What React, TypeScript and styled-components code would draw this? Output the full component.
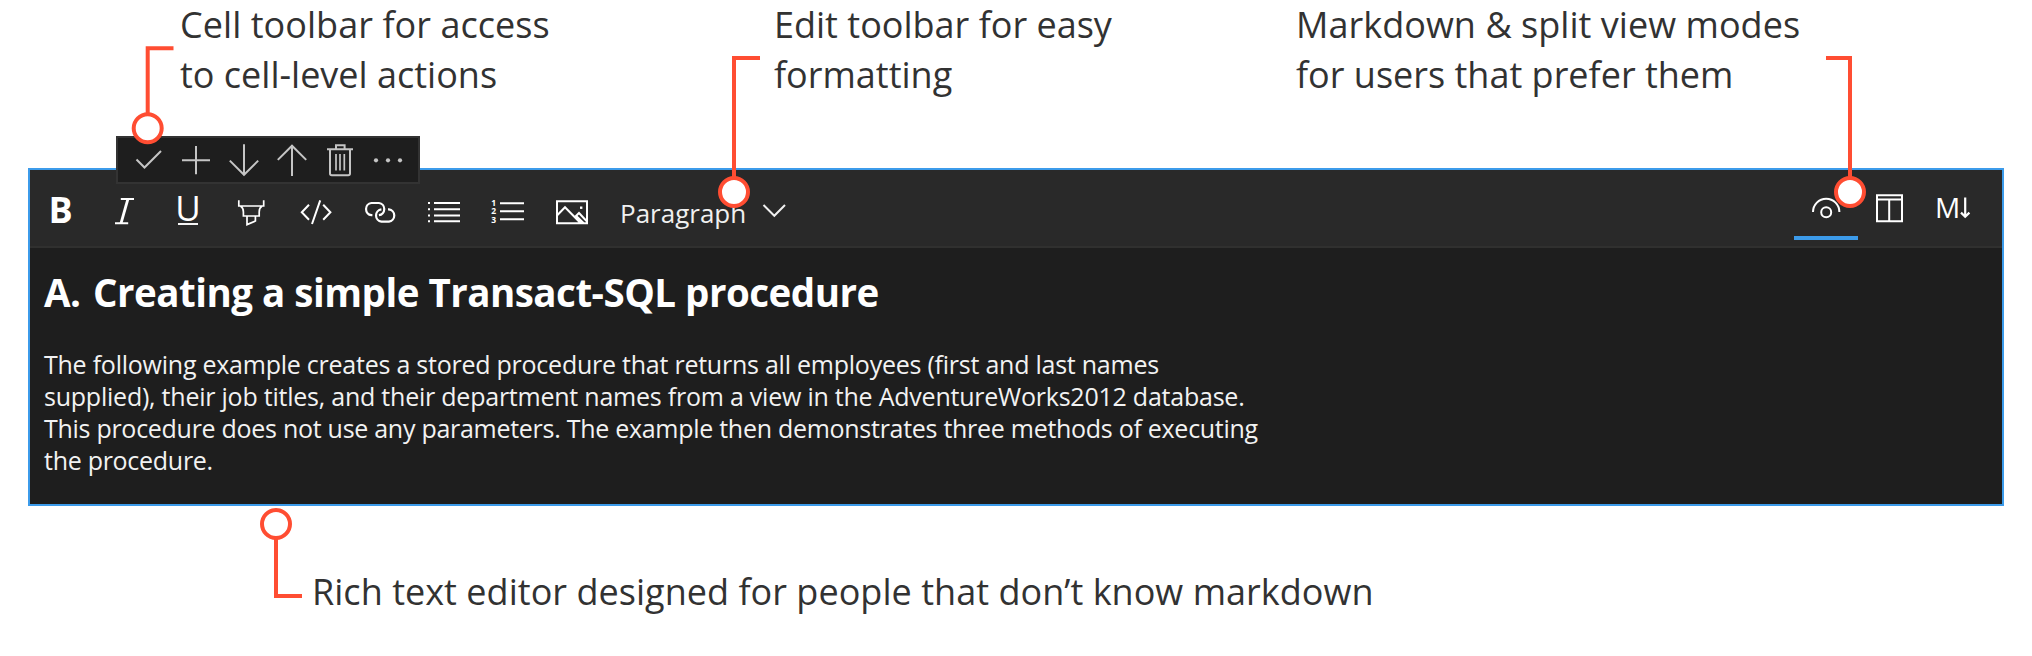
import React from 'react';
import styled, { createGlobalStyle } from 'styled-components';

const GlobalStyle = createGlobalStyle`
  * { box-sizing: border-box; }
  body {
    margin: 0;
    background: #ffffff;
    font-family: 'Open Sans', 'Noto Sans', sans-serif;
  }
`;

const Page = styled.main`
  position: relative;
  display: flex;
  flex-direction: column;
  width: 2032px;
  height: 656px;
  overflow: hidden;
`;

const Notes = styled.header`
  display: grid;
  grid-template-columns: 594px 522px auto;
  height: 168px;
  padding-left: 180px;
`;

const Note = styled.p<{ $tracking?: number }>`
  margin: 0;
  color: #323232;
  font-size: 36px;
  line-height: 50px;
  white-space: nowrap;
  letter-spacing: ${(p) => p.$tracking ?? 0}px;
`;

const NoteLine = styled.span<{ $tracking?: number }>`
  display: block;
  letter-spacing: ${(p) => p.$tracking ?? 0}px;
`;

const Editor = styled.section`
  position: relative;
  display: flex;
  flex-direction: column;
  width: 1976px;
  height: 338px;
  margin-left: 28px;
  background: #1e1e1e;
  border: 2px solid #3c9bea;
`;

const CellToolbar = styled.div`
  position: absolute;
  left: 86px;
  top: -34px;
  display: flex;
  align-items: center;
  width: 304px;
  height: 48px;
  padding-left: 8px;
  background: #1e1e1e;
  border: 2px solid #333333;
`;

const CellAction = styled.button`
  display: flex;
  width: 48px;
  height: 44px;
  padding: 0;
  background: none;
  border: 0;
  color: #c5c5c5;
`;

const EditToolbar = styled.div`
  display: flex;
  justify-content: space-between;
  height: 78px;
  padding-right: 16px;
  background: #292929;
  border-bottom: 2px solid #30302f;
  color: #ffffff;
`;

const ToolGroup = styled.div`
  display: flex;
`;

const Tool = styled.button`
  display: flex;
  justify-content: center;
  align-items: center;
  width: 64px;
  height: 76px;
  padding: 0;
  background: none;
  border: 0;
  color: inherit;
`;

const BoldGlyph = styled.span`
  margin-right: 3px;
  padding-top: 4px;
  font: 700 36px/50px 'Open Sans', sans-serif;
`;

const UnderlineGlyph = styled.span`
  height: 28px;
  width: 20px;
  margin: 6px 4px 0 0;
  display: flex;
  justify-content: center;
  border-bottom: 2px solid #f4f4f4;
  font: 400 35px/22px 'Open Sans', sans-serif;
`;

const StyleSelect = styled.button`
  display: flex;
  align-items: center;
  gap: 16px;
  padding: 10px 0 0 14px;
  background: none;
  border: 0;
  color: #f0f0f0;
  font: 400 26px/36px 'Open Sans', sans-serif;
`;

const ViewTab = styled.button<{ $active?: boolean }>`
  display: flex;
  width: 64px;
  height: 70px;
  padding: 0;
  background: none;
  border: 0;
  border-bottom: 4px solid ${(p) => (p.$active ? '#3c9bea' : 'transparent')};
  color: inherit;
`;

const MarkdownLabel = styled.span`
  display: flex;
  align-items: flex-start;
  padding: 18px 0 0 13px;
  font: 400 28px/38px 'Open Sans', sans-serif;
`;

const Drawing = styled.svg`
  display: block;
  flex: none;
  fill: none;
  stroke: currentColor;
  stroke-width: 2;
  overflow: visible;
`;

const Digits = styled.text`
  fill: currentColor;
  stroke: none;
  font: 700 8.5px 'Open Sans', sans-serif;
`;

const Dots = styled.g`
  fill: currentColor;
  stroke: none;
`;

const Content = styled.article`
  padding: 16px 0 0 14px;
  color: #ffffff;
`;

const Heading = styled.h1`
  margin: 0;
  font-size: 38.5px;
  line-height: 56px;
  font-weight: 700;
  letter-spacing: -0.5px;
  white-space: nowrap;
`;

const HeadingIndex = styled.span`
  margin-right: 3px;
`;

const Paragraph = styled.p`
  margin: 28px 0 0;
  color: #f2f2f2;
  font-size: 25px;
  line-height: 32px;
  white-space: nowrap;
`;

const Line = styled.span<{ $tracking: number }>`
  display: block;
  letter-spacing: ${(p) => p.$tracking}px;
`;

const Footer = styled.footer`
  padding: 61px 0 0 312px;
`;

const Annotations = styled.svg`
  position: absolute;
  inset: 0;
  width: 2032px;
  height: 656px;
  pointer-events: none;
  fill: none;
  stroke: #ff4d32;
  stroke-width: 4;
`;

const Pin = styled.circle.attrs({ r: 14 })`
  fill: #ffffff;
`;

const CellIcon = ({ children }: { children: React.ReactNode }) => (
  <Drawing width="48" height="44" viewBox="0 0 48 44">{children}</Drawing>
);

const ToolIcon = ({ children }: { children: React.ReactNode }) => (
  <Drawing width="64" height="76" viewBox="0 0 64 76">{children}</Drawing>
);

const CellActions = () => (
  <CellToolbar>
    <CellAction aria-label="Done">
      <CellIcon><path d="M10.5 21.5 L18.5 29.5 L35 13" /></CellIcon>
    </CellAction>
    <CellAction aria-label="Add cell">
      <CellIcon><path d="M8 22.3 H36 M22 8 V36.3" /></CellIcon>
    </CellAction>
    <CellAction aria-label="Move down">
      <CellIcon><path d="M22 6.3 V37.5 M7.8 22.6 L22 36.8 L36.2 22.6" /></CellIcon>
    </CellAction>
    <CellAction aria-label="Move up">
      <CellIcon><path d="M22 38 V7 M7.8 21.9 L22 7.7 L36.2 21.9" /></CellIcon>
    </CellAction>
    <CellAction aria-label="Delete">
      <CellIcon>
        <path d="M9 11.3 H35 M18 11 V7.3 H26.6 V11 M12 11.5 V35.5 Q12 37.3 13.8 37.3 H30.2 Q32 37.3 32 35.5 V11.5" />
        <path d="M18 16 V32.6 M22 16 V32.6 M26.3 16 V32.6" strokeWidth="1.7" />
      </CellIcon>
    </CellAction>
    <CellAction aria-label="More">
      <CellIcon>
        <Dots><circle cx="10" cy="22.3" r="2.1" /><circle cx="22" cy="22.3" r="2.1" /><circle cx="34" cy="22.3" r="2.1" /></Dots>
      </CellIcon>
    </CellAction>
  </CellToolbar>
);

const FormatTools = () => (
  <ToolGroup>
    <Tool aria-label="Bold"><BoldGlyph>B</BoldGlyph></Tool>
    <Tool aria-label="Italic">
      <ToolIcon>
        <path d="M26.8 29 H40 M21 53.3 H34.2" />
        <path d="M33.9 29 L27 53.3" strokeWidth="2.8" />
      </ToolIcon>
    </Tool>
    <Tool aria-label="Underline"><UnderlineGlyph>U</UnderlineGlyph></Tool>
    <Tool aria-label="Highlight">
      <ToolIcon>
        <path strokeWidth="1.7" d="M16.8 30.3 V36 H41.7 V30.3 M18.5 36 C20.8 37.5 21.4 39 21.4 42 V46 H37.2 V42 C37.2 39 37.8 37.5 40 36 M25 46 V54.6 L33.4 51 V46" />
      </ToolIcon>
    </Tool>
    <Tool aria-label="Code">
      <ToolIcon>
        <path d="M23 34.8 L15.8 42.3 L23 49.8 M37.2 34.8 L44.4 42.3 L37.2 49.8 M34.2 30.3 L26 54" />
      </ToolIcon>
    </Tool>
    <Tool aria-label="Link">
      <ToolIcon>
        <path strokeWidth="2.2" d="M22.4 45.2 H21.4 A6.15 6.15 0 0 1 21.4 33 H28.9 A6.15 6.15 0 0 1 28.9 45.2" />
        <path strokeWidth="2.2" d="M38 39.4 H38.9 A6.15 6.15 0 0 1 38.9 51.6 H31.4 A6.15 6.15 0 0 1 31.4 39.4" />
      </ToolIcon>
    </Tool>
    <Tool aria-label="Bulleted list">
      <ToolIcon>
        <path d="M20 33 H46 M20 39.2 H46 M20 45.4 H46 M20 51.3 H46" />
        <path d="M14 33 H16 M14 39.2 H16 M14 45.4 H16 M14 51.3 H16" />
      </ToolIcon>
    </Tool>
    <Tool aria-label="Numbered list">
      <ToolIcon>
        <path d="M22 33.3 H46 M22 41.3 H46 M22 49.3 H46" />
        <Digits x="13.3" y="36.3">1</Digits>
        <Digits x="13.3" y="44.4">2</Digits>
        <Digits x="13.3" y="52.5">3</Digits>
      </ToolIcon>
    </Tool>
    <Tool aria-label="Image">
      <ToolIcon>
        <path d="M15 31.2 H45 V53.2 H15 Z M15.5 45 L23 37.3 L38.5 53 M32.5 47.5 L37 43 L45 51.5 M34 45.8 L41.5 53" />
        <Dots><rect x="38" y="36.5" width="2.4" height="2.4" /></Dots>
      </ToolIcon>
    </Tool>
    <StyleSelect>
      Paragraph
      <Drawing width="24" height="20" viewBox="0 0 24 20"><path d="M1.5 2 L12.3 12.8 L23 2" /></Drawing>
    </StyleSelect>
  </ToolGroup>
);

const ViewModes = () => (
  <ToolGroup>
    <ViewTab $active aria-label="Rich text view">
      <ToolIcon>
        <path d="M19 42 A13.2 13.2 0 0 1 45.4 42" />
        <circle cx="32.2" cy="42.3" r="5" />
      </ToolIcon>
    </ViewTab>
    <ViewTab aria-label="Split view">
      <ToolIcon>
        <path d="M19 25.2 H44 V51.2 H19 Z M19 29.6 H44 M31.2 29.6 V51" />
      </ToolIcon>
    </ViewTab>
    <ViewTab aria-label="Markdown view">
      <MarkdownLabel>
        M
        <Drawing width="10" height="24" viewBox="0 0 10 24">
          <path d="M5.2 9.5 V29 M1 24.6 L5.2 28.8 L9.4 24.6" strokeWidth="2.2" />
        </Drawing>
      </MarkdownLabel>
    </ViewTab>
  </ToolGroup>
);

export default function App() {
  return (
    <>
      <GlobalStyle />
      <Page>
        <Notes>
          <Note>
            <NoteLine $tracking={0.05}>Cell toolbar for access</NoteLine>
            <NoteLine>to cell-level actions</NoteLine>
          </Note>
          <Note>
            <NoteLine>Edit toolbar for easy</NoteLine>
            <NoteLine>formatting</NoteLine>
          </Note>
          <Note>
            <NoteLine $tracking={0.04}>Markdown &amp; split view modes</NoteLine>
            <NoteLine>for users that prefer them</NoteLine>
          </Note>
        </Notes>
        <Editor>
          <EditToolbar>
            <FormatTools />
            <ViewModes />
          </EditToolbar>
          <CellActions />
          <Content>
            <Heading><HeadingIndex>A.</HeadingIndex> Creating a simple Transact-SQL procedure</Heading>
            <Paragraph>
              <Line $tracking={-0.24}>The following example creates a stored procedure that returns all employees (first and last names</Line>
              <Line $tracking={-0.23}>supplied), their job titles, and their department names from a view in the AdventureWorks2012 database.</Line>
              <Line $tracking={-0.28}>This procedure does not use any parameters. The example then demonstrates three methods of executing</Line>
              <Line $tracking={-0.28}>the procedure.</Line>
            </Paragraph>
          </Content>
        </Editor>
        <Footer>
          <Note $tracking={0.03}>Rich text editor designed for people that don’t know markdown</Note>
        </Footer>
        <Annotations>
          <path d="M173.5 48.3 H147.7 V114" />
          <path d="M760 58 H734 V178" />
          <path d="M1826 58 H1850 V178" />
          <path d="M276 538 V596 H302" />
          <Pin cx="147.7" cy="128.3" />
          <Pin cx="734" cy="192" />
          <Pin cx="1850" cy="192" />
          <Pin cx="276" cy="524" />
        </Annotations>
      </Page>
    </>
  );
}
